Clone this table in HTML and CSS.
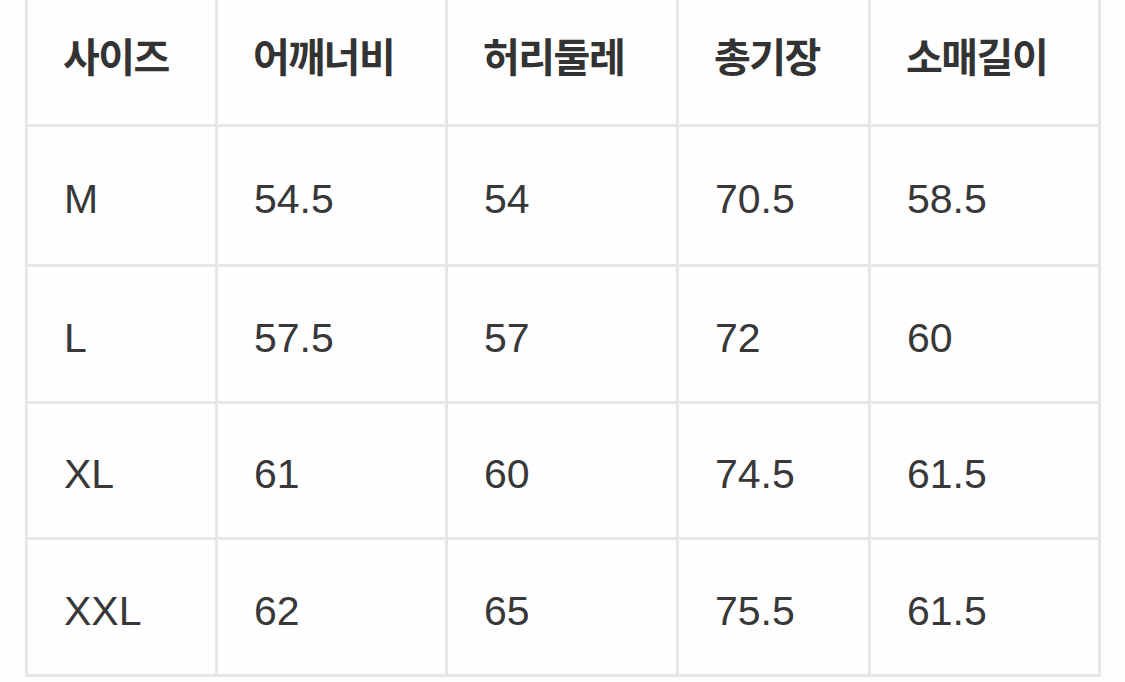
FILE: index.html
```html
<!DOCTYPE html>
<html lang="ko">
<head>
<meta charset="utf-8">
<title>사이즈</title>
<link rel="stylesheet" href="styles.css">
</head>
<body>
<div class="size-table">
  <div class="cell head">사이즈</div>
  <div class="cell head">어깨너비</div>
  <div class="cell head">허리둘레</div>
  <div class="cell head">총기장</div>
  <div class="cell head">소매길이</div>

  <div class="cell">M</div>
  <div class="cell">54.5</div>
  <div class="cell">54</div>
  <div class="cell">70.5</div>
  <div class="cell">58.5</div>

  <div class="cell">L</div>
  <div class="cell">57.5</div>
  <div class="cell">57</div>
  <div class="cell">72</div>
  <div class="cell">60</div>

  <div class="cell">XL</div>
  <div class="cell">61</div>
  <div class="cell">60</div>
  <div class="cell">74.5</div>
  <div class="cell">61.5</div>

  <div class="cell">XXL</div>
  <div class="cell">62</div>
  <div class="cell">65</div>
  <div class="cell">75.5</div>
  <div class="cell">61.5</div>
</div>
</body>
</html>
```
FILE: styles.css
```css
html, body {
  margin: 0;
  padding: 0;
  background: #fdfdfd;
}

body {
  font-family: "Liberation Sans", Arial, "Noto Sans CJK KR", sans-serif;
  color: #383838;
}

.size-table {
  margin-left: 25px;
  width: 1070px;
  display: grid;
  grid-template-columns: 187px 227px 228px 189px 227px;
  grid-template-rows: 124px 137px 134px 133px 134px;
  gap: 3px;
  padding: 0 3px 3px 3px;
  background: #e7e7e7;
}

.cell {
  background: #fefefe;
  display: flex;
  align-items: center;
  padding: 8px 0 0 36px;
  font-size: 41px;
  line-height: 1;
}

.cell.head {
  font-family: "Noto Sans CJK KR", "Liberation Sans", sans-serif;
  font-weight: 700;
  font-size: 40px;
  letter-spacing: -1.5px;
  padding: 0 0 14px 35px;
  color: #333333;
}
```
